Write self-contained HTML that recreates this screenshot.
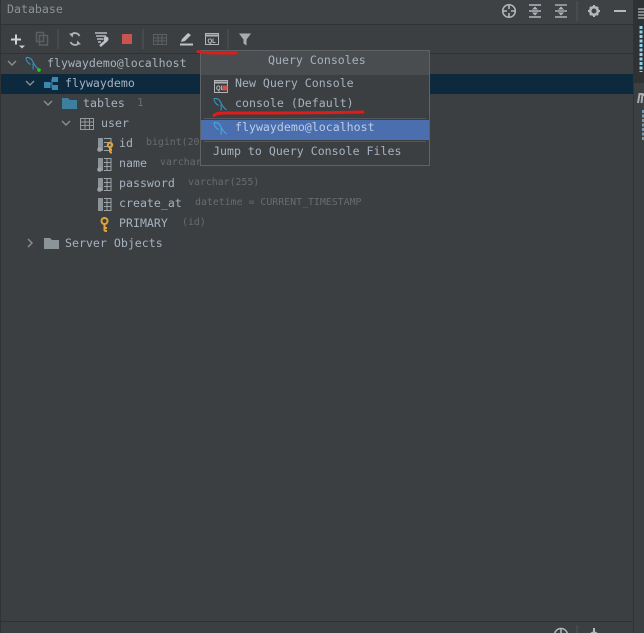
<!DOCTYPE html>
<html><head><meta charset="utf-8">
<style>
html,body{margin:0;padding:0;background:#3c3f41;}
#r{position:relative;width:644px;height:633px;overflow:hidden;background:#3c3f41;font-family:"DejaVu Sans Mono","Liberation Mono",monospace;font-size:11.6px;color:#a5b2bf;}
.t{position:absolute;white-space:pre;line-height:14px;height:14px;}
.d{color:#686c6f;font-size:9.9px;}
.b{position:absolute;}
svg{position:absolute;left:0;top:0;}
</style></head><body>
<div id="r">
<div class="b" style="left:0;top:0;width:633px;height:24px;background:#3e4244"></div>
<div class="b" style="left:0;top:24px;width:633px;height:1px;background:#323232"></div>
<div class="b" style="left:0;top:53px;width:633px;height:1px;background:#323232"></div>
<div class="b" style="left:0;top:74px;width:633px;height:20px;background:#0d293e"></div>
<div class="b" style="left:0;top:621px;width:633px;height:1px;background:#2f3133"></div>
<div class="b" style="left:633px;top:0;width:1px;height:633px;background:#323232"></div>
<div class="b" style="left:634px;top:0;width:10px;height:83px;background:#2f3133"></div>
<div class="b" style="left:634px;top:83px;width:10px;height:550px;background:#3c3f41"></div>
<div class="b" style="left:0;top:0;width:1px;height:633px;background:#323232"></div>

<div class="t" style="left:7px;top:2px;color:#8d9296">Database</div>

<div class="t" style="left:47px;top:56px">flywaydemo@localhost</div>
<div class="t" style="left:65px;top:76px">flywaydemo</div>
<div class="t" style="left:83px;top:96px">tables</div><div class="t d" style="left:137px;top:96px;font-size:11px">1</div>
<div class="t" style="left:101px;top:116px">user</div>
<div class="t" style="left:119px;top:136px">id</div><div class="t d" style="left:146px;top:136px">bigint(20)</div>
<div class="t" style="left:119px;top:156px">name</div><div class="t d" style="left:160px;top:156px">varchar(255)</div>
<div class="t" style="left:119px;top:176px">password</div><div class="t d" style="left:188px;top:176px">varchar(255)</div>
<div class="t" style="left:119px;top:196px">create_at</div><div class="t d" style="left:195px;top:196px">datetime = CURRENT_TIMESTAMP</div>
<div class="t" style="left:119px;top:216px">PRIMARY</div><div class="t d" style="left:182px;top:216px">(id)</div>
<div class="t" style="left:65px;top:236px">Server Objects</div>

<svg width="644" height="633" viewBox="0 0 644 633" fill="none">
 <!-- title bar icons -->
 <g stroke="#b4b8bb" stroke-width="1.5">
  <circle cx="509" cy="11" r="6.300"/>
  <path d="M509 5v4M509 13v4M503 11h4M511 11h4" stroke-width="1.600"/>
  <path d="M529 5h12M529 17h12M529 11h12" stroke-width="1.600"/>
  <path d="M555 5h12M555 11h12" stroke-width="1.600" stroke="#a8acaf"/>
  <path d="M555 17h12" stroke-width="1.600" stroke="#a8acaf"/>
  <circle cx="594" cy="11" r="3.800" stroke-width="2.600"/>
  <path d="M594 5v2M594 15v2M588 11h2M598 11h2M590 7l1 1M597 14l1 1M598 7l-1 1M590 15l1-1" stroke-width="2"/>
  <path d="M614 11h12" stroke-width="2"/>
 </g>
 <path d="M532 9.500h6l-3-3zM532 12.500h6l-3 3zM558 9.500l3-3 3 3zM558 12.500l3 3 3-3z" fill="#b4b8bb"/>
 <path d="M577 1v20" stroke="#515557"/>

 <!-- toolbar -->
 <path d="M11 39.500h10M16 34.500v10" stroke="#d0d3d5" stroke-width="2"/>
 <path d="M19 45.500h6l-3 3z" fill="#c8cbcd"/>
 <g stroke="#5b5f62" stroke-width="1.500"><rect x="39.500" y="35.500" width="8" height="9.500"/><rect x="36.500" y="32.500" width="7" height="9"/></g>
 <path d="M58 29v20M143 29v20M228 29v20" stroke="#515557"/>
 <path d="M79.500 36a5 5 0 0 0-8.500-1M70.500 42a5 5 0 0 0 8.500 1" stroke="#b0b4b7" stroke-width="1.800"/>
 <path d="M69 33.500l4.500 0-1 4zM81 44.500l-4.500 0 1-4z" fill="#b0b4b7"/>
 <path d="M95 33h12M96 36h10M97 39h6M98 42h3" stroke="#a6aaad" stroke-width="1.700"/>
 <path d="M100 46l7-6" stroke="#c0c3c5" stroke-width="2.500"/><circle cx="106" cy="39" r="2.500" fill="#c0c3c5"/>
 <rect x="122" y="34" width="10" height="10" fill="#c75450"/>
 <g stroke="#5c6063"><rect x="153.500" y="34.500" width="13" height="10"/><path d="M153 38h14M153 41h14M158 34v11M162 34v11"/></g>
 <path d="M180 44.500h13" stroke="#c0c3c5" stroke-width="2"/>
 <path d="M181 42l1-3 6-6 3 2-6 6z" fill="#c0c3c5"/>
 <rect x="205.500" y="33.500" width="13" height="11" stroke="#b0b4b7"/><path d="M205 35.500h14" stroke="#b0b4b7" stroke-width="2"/>
 <text x="207.500" y="43" font-family="Liberation Sans" font-weight="700" font-size="6" fill="#c0c3c5">QL</text>
 <path d="M239 33.500h12l-4.500 6v6l-3-2v-4z" fill="#a8acaf"/>

 <!-- tree chevrons -->
 <g stroke="#8b8f92" stroke-width="1.400">
  <path d="M8 61l4 4 4-4M26 81l4 4 4-4M44 101l4 4 4-4M62 121l4 4 4-4M28 239l4 4-4 4"/>
 </g>
 <!-- mysql icon -->
 <path d="M26 57.500c3-.5 5.500 1 6.800 4 1 2.500 2.500 5 5.700 7.500M26 57.500c0 3 2 5.500 4.500 7M32.800 63.500c.5 2 .5 4 .2 6" stroke="#3592c4" stroke-width="1.100"/>
 <circle cx="39" cy="70" r="1.800" fill="#23d018"/>
 <!-- schema -->
 <g fill="#3d86ad">
  <rect x="52" y="77" width="6" height="5"/><rect x="44" y="82" width="6.500" height="6"/><rect x="52" y="85" width="6" height="5"/>
 </g>
 <path d="M50 84h2M51 80h1v8h1" stroke="#3d86ad"/>
 <!-- folders -->
 <path d="M62 98h6l2 2h7v9H62z" fill="#3d7f9f"/>
 <path d="M44 238h6l2 2h7v9H44z" fill="#8a9499"/>
 <!-- table -->
 <g stroke="#94999c"><rect x="80.500" y="118.500" width="13" height="11"/><path d="M80 122h14M80 125.500h14M85 118v11M89.500 118v11"/></g>
 <!-- columns -->
 <g fill="#8a9499"><rect x="98" y="138" width="5" height="13"/><rect x="98" y="158" width="5" height="13"/><rect x="98" y="178" width="5" height="13"/><rect x="98" y="198" width="5" height="13"/></g>
 <g stroke="#9ea3a6"><path d="M104 138.500h7v12h-7M104 142.500h7M104 146.500h7"/>
  <path d="M104 158.500h7v12h-7M104 162.500h7M104 166.500h7M107 158v12"/>
  <path d="M104 178.500h7v12h-7M104 182.500h7M104 186.500h7M107 178v12"/>
  <path d="M104 198.500h7v12h-7M104 202.500h7M104 206.500h7M107 198v12"/></g>
 <g fill="#9ea3a6"><circle cx="99.500" cy="149.500" r="2.300"/><circle cx="99.500" cy="169.500" r="2.300"/><circle cx="99.500" cy="189.500" r="2.300"/></g>
 <!-- keys -->
 <g stroke="#e0a23a" stroke-width="2"><circle cx="110" cy="145" r="2.200"/><path d="M110 147v5.500M110 150h2M110 152.500h2"/>
  <circle cx="104.500" cy="221" r="3"/><path d="M104.500 224v7M104.500 228h2.500M104.500 231h2.500"/></g>
</svg>

<!-- popup -->
<div class="b" style="left:200px;top:50px;width:230px;height:116px;background:#3c3f41;border:1px solid #5f6264;box-sizing:border-box"></div>
<div class="b" style="left:201px;top:51px;width:228px;height:24px;background:#4a4d50"></div>
<div class="b" style="left:201px;top:120px;width:228px;height:20px;background:#4b6eaf"></div>
<div class="b" style="left:204px;top:118px;width:222px;height:1px;background:#55585a"></div>
<div class="b" style="left:204px;top:141px;width:222px;height:1px;background:#55585a"></div>
<div class="t" style="left:268px;top:53px;">Query Consoles</div>
<div class="t" style="left:235px;top:76px;">New Query Console</div>
<div class="t" style="left:235px;top:96px;">console (Default)</div>
<div class="t" style="left:235px;top:120px;color:#bbcde6">flywaydemo@localhost</div>
<div class="t" style="left:213px;top:144px;">Jump to Query Console Files</div>

<svg width="644" height="633" viewBox="0 0 644 633" fill="none">
 <rect x="214.500" y="80.500" width="13" height="12" stroke="#b0b4b7"/><path d="M214 82.500h14" stroke="#b0b4b7" stroke-width="2"/>
 <text x="216" y="90" font-family="Liberation Sans" font-weight="700" font-size="6" fill="#c0c3c5">QL</text>
 <rect x="222.500" y="85.500" width="5" height="5" fill="#c75450"/>
 <path d="M214 98.500c3-.5 5.500 1 6.800 4 1 2.500 2.500 5 5.700 7.500M214 98.500c0 3 2 5.500 4.500 7M220.800 104.500c.5 2 .5 4 .2 6" stroke="#3592c4" stroke-width="1.100"/>
 <path d="M214 122.500c3-.5 5.500 1 6.800 4 1 2.500 2.500 5 5.700 7.500M214 122.500c0 3 2 5.500 4.500 7M220.800 128.500c.5 2 .5 4 .2 6" stroke="#46a8dd" stroke-width="1.100"/>
 <!-- red annotations -->
 <path d="M198 51.500c4 1.500 10 1.500 38 1.500" stroke="#e01b1b" stroke-width="3" stroke-linecap="round"/>
 <path d="M214 115.500c3-3 8-2.500 18-2.500 40 0 90 0 131-1" stroke="#e01b1b" stroke-width="3" stroke-linecap="round"/>
 <!-- right strip -->
 <path d="M638 9h6M638 12h6M638 15h6M638 18h6" stroke="#9fa3a6" stroke-width="1.500"/>
 <path d="M641 26v46" stroke="#8fd0e8" stroke-width="3" stroke-dasharray="3 1.500"/>
 <path d="M638 103l1.500-9h3l-1 9M642.500 95h2" stroke="#a9adb0" stroke-width="2"/>
 <path d="M643 110v30" stroke="#7f98a8" stroke-width="2" stroke-dasharray="3 1.500"/>
 <!-- bottom icons -->
 <circle cx="561" cy="635" r="6.500" stroke="#b4b8bb" stroke-width="1.500"/><path d="M561 628v6" stroke="#b4b8bb" stroke-width="1.500"/>
 <path d="M577 625v8" stroke="#515557"/>
 <circle cx="594" cy="637" r="5.500" fill="#b4b8bb"/><path d="M594 628v4" stroke="#b4b8bb" stroke-width="2"/>
</svg>
</div>
</body></html>
